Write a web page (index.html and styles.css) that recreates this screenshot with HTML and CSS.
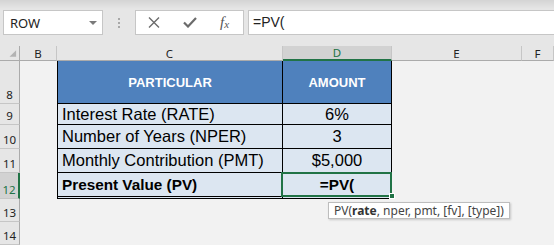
FILE: index.html
```html
<!DOCTYPE html>
<html>
<head>
<meta charset="utf-8">
<link rel="stylesheet" href="styles.css">
</head>
<body>
<div class="fbar">
  <div class="namebox"><span>ROW</span><i class="caret"></i></div>
  <div class="dots"><i></i><i></i><i></i></div>
  <div class="btnbox">
    <svg class="ico-x" width="12" height="11" viewBox="0 0 12 11"><path d="M1 0.5 L11 10.5 M11 0.5 L1 10.5" stroke="#6b6b6b" stroke-width="1.4" fill="none"/></svg>
    <svg class="ico-ok" width="14" height="11" viewBox="0 0 14 11"><path d="M1 5.5 L5 9.5 L13 1" stroke="#6b6b6b" stroke-width="2.2" fill="none"/></svg>
    <span class="fx">f<sub>x</sub></span>
  </div>
  <div class="input">=PV(</div>
</div>
<div class="sheet">
  <div class="ch corner"><svg width="20" height="14" viewBox="0 0 20 14"><polygon points="17,4 17,11 10,11" fill="#b3b3b3"/></svg></div>
  <div class="ch">B</div>
  <div class="ch">C</div>
  <div class="ch sel">D</div>
  <div class="ch">E</div>
  <div class="ch">F</div>

  <div class="rh">8</div><div class="b"></div>
  <div class="c head">PARTICULAR</div><div class="d head">AMOUNT</div>

  <div class="rh">9</div><div class="b"></div>
  <div class="c data">Interest Rate (RATE)</div><div class="d data">6%</div>

  <div class="rh">10</div><div class="b"></div>
  <div class="c data">Number of Years (NPER)</div><div class="d data">3</div>

  <div class="rh">11</div><div class="b"></div>
  <div class="c data">Monthly Contribution (PMT)</div><div class="d data">$5,000</div>

  <div class="rh rsel">12</div><div class="b"></div>
  <div class="c data last strong">Present Value (PV)</div><div class="d data last strong active">=PV(</div>

  <div class="rh">13</div>
  <div class="rh">14</div>

  <div class="tip">PV(<b>rate</b>, nper, pmt, [fv], [type])</div>
</div>
</body>
</html>
```
FILE: styles.css
```css
html, body {
  margin: 0;
  padding: 0;
}
body {
  width: 554px;
  height: 245px;
  overflow: hidden;
  background: #f2f2f2;
  font-family: "Noto Sans", "Liberation Sans", sans-serif;
}

/* formula bar */
.fbar {
  height: 46px;
  box-sizing: border-box;
  padding: 10px 0 0 3px;
  display: flex;
  align-items: flex-start;
  background: linear-gradient(to bottom, #d4d4d4 0px, #e6e6e6 9px, #e6e6e6 100%);
}
.namebox {
  width: 100px;
  height: 25px;
  box-sizing: border-box;
  border: 1px solid #c6c6c6;
  background: #fff;
  display: flex;
  align-items: center;
  padding-left: 6px;
  font-size: 13px;
  color: #222;
}
.caret {
  margin-left: auto;
  margin-right: 5px;
  width: 0;
  height: 0;
  border-top: 4px solid #7a7a7a;
  border-left: 4px solid transparent;
  border-right: 4px solid transparent;
}
.dots {
  width: 32px;
  height: 25px;
  display: flex;
  flex-direction: column;
  align-items: center;
  justify-content: center;
  gap: 2px;
}
.dots i {
  display: block;
  width: 2px;
  height: 2px;
  background: #a8a8a8;
}
.btnbox {
  width: 109px;
  height: 25px;
  box-sizing: border-box;
  border: 1px solid #c6c6c6;
  background: #fff;
  display: flex;
  align-items: center;
  padding-left: 12px;
  gap: 23px;
}
.fx {
  font-family: "Liberation Serif", serif;
  font-style: italic;
  font-size: 15px;
  color: #555;
  width: 12px;
  line-height: 1;
  white-space: nowrap;
}
.fx sub {
  font-size: 11px;
  vertical-align: -1px;
}
.input {
  margin-left: 4px;
  flex: 1;
  height: 25px;
  box-sizing: border-box;
  border: 1px solid #c6c6c6;
  border-right: none;
  background: #fff;
  padding-left: 4px;
  font-family: "Liberation Sans", Arial, sans-serif;
  font-size: 14px;
  line-height: 22px;
  color: #222;
}

/* sheet */
.sheet {
  position: relative;
  display: grid;
  grid-template-columns: 20px 37px 226px 109px 130px 1fr;
  grid-template-rows: 15px 43px 21px 24px 24px 26px 23px 23px;
}
.ch {
  background: #e6e6e6;
  border-right: 1px solid #c6c6c6;
  border-bottom: 1px solid #ababab;
  box-sizing: border-box;
  display: flex;
  align-items: center;
  justify-content: center;
  font-size: 11.5px;
  color: #222;
}
.ch.corner {
  align-items: stretch;
  justify-content: stretch;
  border-right: 1px solid #ababab;
}
.ch.sel {
  background: #d2d2d2;
  color: #217346;
  border-bottom: 2px solid #217346;
}
.rh {
  grid-column: 1;
  background: #e6e6e6;
  border-right: 1px solid #ababab;
  border-bottom: 1px solid #c6c6c6;
  box-sizing: border-box;
  display: flex;
  align-items: flex-end;
  justify-content: center;
  padding-bottom: 3px;
  font-size: 11.5px;
  line-height: 1;
  color: #222;
}
.rh.rsel {
  background: #d2d2d2;
  color: #217346;
  border-right: 2px solid #217346;
}
.c, .d {
  box-sizing: border-box;
  border-right: 1px solid #000;
  border-bottom: 1px solid #000;
  display: flex;
  align-items: center;
  font-family: "Liberation Sans", Arial, sans-serif;
  color: #000;
  white-space: nowrap;
}
.c {
  border-left: 1px solid #000;
  padding-left: 4px;
}
.d {
  justify-content: center;
}
.head {
  background: #4f81bd;
  color: #fff;
  font-weight: bold;
  font-size: 13px;
  justify-content: center;
  padding-left: 0;
}
.data {
  background: #dce6f1;
  font-size: 16.5px;
}
.strong {
  font-weight: bold;
  font-size: 15.3px;
}
.last {
  border-bottom: 3px double #000;
}
.active {
  position: relative;
}
.active::before {
  content: "";
  position: absolute;
  left: -2px;
  top: -1px;
  right: -1px;
  bottom: -1px;
  border: 2px solid #217346;
}
.active::after {
  content: "";
  position: absolute;
  right: -4px;
  bottom: -3px;
  width: 4px;
  height: 4px;
  background: #217346;
  border: 1px solid #fff;
}
.tip {
  position: absolute;
  left: 328px;
  top: 156px;
  height: 17px;
  box-sizing: border-box;
  padding: 0 5px;
  background: #fff;
  border: 1px solid #bdbdbd;
  box-shadow: 1px 1px 2px rgba(0, 0, 0, 0.18);
  font-size: 12px;
  line-height: 15px;
  color: #444;
  white-space: nowrap;
}
.tip b {
  color: #333;
}
```
